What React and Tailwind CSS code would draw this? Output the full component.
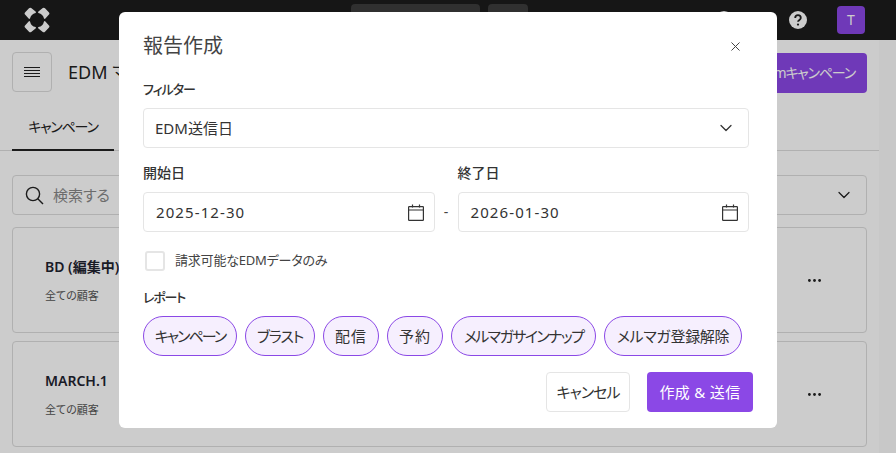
import React from 'react';
import { ChevronDown, X } from 'lucide-react';

const font = "font-['Noto_Sans','Noto_Sans_CJK_JP',sans-serif] [font-feature-settings:'palt']";
const reports = [
  { label: 'キャンペーン', cls: 'w-[94px] tracking-[-2px]' },
  { label: 'ブラスト', cls: 'w-[70px] tracking-[-1.2px]' },
  { label: '配信', cls: 'w-[56px] tracking-[1px]' },
  { label: '予約', cls: 'w-[56px] tracking-[1px]' },
  { label: 'メルマガサインナップ', cls: 'w-[145px] tracking-[-1.6px]' },
  { label: 'メルマガ登録解除', cls: 'w-[138px] tracking-[-0.3px]' },
];

function Logo() {
  return (
    <svg width="26" height="26" viewBox="0 0 26 26" fill="#ffffff">
      <path d="M0.6 7Q0.4 6 1.2 5.2L5 1.2Q6 0.2 7.2 1L11.6 4.6Q12.4 5.4 11.6 6Q7 7 6 11.6Q5.4 12.4 4.6 11.6Z" />
      <path d="M25.4 7Q25.6 6 24.8 5.2L21 1.2Q20 0.2 18.8 1L14.4 4.6Q13.6 5.4 14.4 6Q19 7 20 11.6Q20.6 12.4 21.4 11.6Z" />
      <path d="M0.6 19Q0.4 20 1.2 20.8L5 24.8Q6 25.8 7.2 25L11.6 21.4Q12.4 20.6 11.6 20Q7 19 6 14.4Q5.4 13.6 4.6 14.4Z" />
      <path d="M25.4 19Q25.6 20 24.8 20.8L21 24.8Q20 25.8 18.8 25L14.4 21.4Q13.6 20.6 14.4 20Q19 19 20 14.4Q20.6 13.6 21.4 14.4Z" />
    </svg>
  );
}

function HelpIcon() {
  return (
    <svg width="18" height="18" viewBox="0 0 18 18">
      <circle cx="9" cy="9" r="9" fill="#ffffff" />
      <path d="M6.2 7a2.8 2.8 0 0 1 5.6 0c0 1.8-2.8 2-2.8 3.8" fill="none" stroke="#1f1f1f" strokeWidth="1.8" />
      <circle cx="9" cy="13.6" r="1.1" fill="#1f1f1f" />
    </svg>
  );
}

function MenuIcon() {
  return (
    <svg width="16" height="13" viewBox="0 0 16 13" stroke="#222" strokeWidth="1">
      <path d="M0 1.5H16M0 4.5H16M0 7.5H16M0 10.5H16" />
    </svg>
  );
}

function SearchIcon() {
  return (
    <svg width="19" height="19" viewBox="0 0 19 19" fill="none" stroke="#222" strokeWidth="1.4">
      <circle cx="8" cy="8" r="6.6" />
      <path d="M12.8 12.8L18 18" />
    </svg>
  );
}

function CalendarIcon() {
  return (
    <svg width="16" height="17" viewBox="0 0 16 17" fill="none" stroke="#333" strokeWidth="1.2">
      <rect x="0.6" y="2.6" width="14.8" height="13.8" rx="0.6" />
      <path d="M0.6 6H15.4M4.5 0.5V3.5M11.5 0.5V3.5" />
    </svg>
  );
}

function Dots() {
  return (
    <svg width="13" height="3" viewBox="0 0 13 3" fill="#222">
      <circle cx="1.4" cy="1.5" r="1.4" />
      <circle cx="6.5" cy="1.5" r="1.4" />
      <circle cx="11.6" cy="1.5" r="1.4" />
    </svg>
  );
}

function CampaignCard({ title }) {
  return (
    <div className="flex h-[106px] items-center justify-between rounded border border-[#dcdcdc] pl-[32px] pr-[45px]">
      <div>
        <p className="text-sm leading-5 font-semibold text-[#1f2430]">{title}</p>
        <p className="mt-[11px] text-[11px] leading-4 text-[#555]">全ての顧客</p>
      </div>
      <Dots />
    </div>
  );
}

function DateField({ label, value }) {
  return (
    <div className="flex-1">
      <p className="mb-[10px] text-sm leading-[18px] font-medium text-[#333]">{label}</p>
      <div className="flex h-10 items-center justify-between rounded border border-[#e5e5e5] pr-[10px] pl-[12px]">
        <span className="text-[15px] tracking-[1.1px] text-[#333]">{value}</span>
        <CalendarIcon />
      </div>
    </div>
  );
}

export default function App() {
  return (
    <div className={`relative h-[453px] w-[896px] overflow-hidden bg-white ${font}`}>
      {/* Page behind the dialog */}
      <div className="flex h-10 items-center bg-[#1c1c1c] pr-[31px] pl-[24px]">
        <Logo />
        <div className="ml-[301px] flex h-10 gap-2 pt-[4px]">
          <div className="h-8 w-[129px] rounded bg-[#3c3c3c]" />
          <div className="h-8 w-10 rounded bg-[#3c3c3c]" />
        </div>
        <div className="ml-auto flex items-center gap-[30px]">
          <div className="mr-[26px] h-[18px] w-[18px] rounded-full bg-white" />
          <HelpIcon />
          <div className="flex h-7 w-7 items-center justify-center rounded bg-[#8b48e6] text-sm text-white">T</div>
        </div>
      </div>

      <div className="flex h-[413px]">
        <div className="w-[879px] px-[12px] pt-[12px]">
          <div className="flex items-start justify-between">
            <div className="flex items-center gap-4">
              <div className="flex h-10 w-10 items-center justify-center rounded border border-[#dcdcdc]">
                <MenuIcon />
              </div>
              <span className="text-lg text-[#222]">EDM マーケティング</span>
            </div>
            <button className="mt-px h-10 rounded bg-[#8b48e6] px-3 text-sm tracking-[-1.2px] whitespace-nowrap text-white">新規Edmキャンペーン</button>
          </div>

          <div className="-mx-[12px] mt-[11px] h-[47px] border-b border-[#dcdcdc] px-[12px]">
            <div className="flex h-[47px] w-[102px] items-center justify-center border-b-2 border-[#222] text-sm tracking-[-1.2px] text-[#222]">キャンペーン</div>
          </div>

          <div className="mt-[24px] flex h-10 items-center justify-between rounded border border-[#dcdcdc] pr-[12px] pl-[12px]">
            <div className="flex items-center gap-[9px]">
              <SearchIcon />
              <span className="text-[15px] text-[#888]">検索する</span>
            </div>
            <ChevronDown size={20} strokeWidth={1.5} className="text-[#222]" />
          </div>

          <div className="mt-[12px] flex flex-col gap-[8px]">
            <CampaignCard title="BD (編集中)" />
            <CampaignCard title="MARCH.1" />
          </div>
        </div>
        <div className="flex-1 bg-[#fafafa]" />
      </div>

      {/* Dialog */}
      <div className="absolute inset-0 bg-black/20">
        <div className="absolute top-[12px] left-[119px] h-[416px] w-[658px] rounded-md bg-white px-[24px] pt-[21px]">
          <div className="flex h-[26px] items-center justify-between pr-[10px]">
            <h2 className="text-xl leading-[26px] font-normal text-[#444]">報告作成</h2>
            <X size={15} strokeWidth={1.6} className="text-[#444]" />
          </div>

          <p className="mt-[21px] text-[13px] leading-[18px] font-medium tracking-[-1px] text-[#333]">フィルター</p>
          <div className="mt-[10px] flex h-10 w-[606px] items-center justify-between rounded border border-[#e5e5e5] pr-[12px] pl-[11px]">
            <span className="text-[15px] text-[#333]">EDM送信日</span>
            <ChevronDown size={20} strokeWidth={1.5} className="text-[#333]" />
          </div>

          <div className="mt-[16px] flex w-[606px] items-end">
            <DateField label="開始日" value="2025-12-30" />
            <span className="flex h-10 w-[23px] items-center justify-center text-sm text-[#444]">-</span>
            <DateField label="終了日" value="2026-01-30" />
          </div>

          <label className="mt-[19px] ml-[2px] flex items-center gap-[10px]">
            <span className="h-5 w-5 rounded-[3px] border-2 border-[#e5e5e5]" />
            <span className="text-[13px] tracking-[-0.2px] text-[#444]">請求可能なEDMデータのみ</span>
          </label>

          <p className="mt-[17px] text-[13px] leading-[18px] font-medium tracking-[-1.2px] text-[#333]">レポート</p>
          <div className="mt-[10px] flex gap-[8px]">
            {reports.map((r) => (
              <span key={r.label} className={`flex h-10 items-center justify-center rounded-full border border-[#8b48e6] bg-[#f6effe] text-[15px] whitespace-nowrap text-[#333] ${r.cls}`}>{r.label}</span>
            ))}
          </div>

          <div className="mt-[16px] flex justify-end gap-[17px]">
            <button className="h-10 w-[84px] rounded border border-[#e5e5e5] bg-white text-[15px] tracking-[-1px] text-[#333]">キャンセル</button>
            <button className="h-10 w-[106px] rounded bg-[#8b48e6] text-[15px] tracking-[0.3px] text-white">作成 & 送信</button>
          </div>
        </div>
      </div>
    </div>
  );
}
